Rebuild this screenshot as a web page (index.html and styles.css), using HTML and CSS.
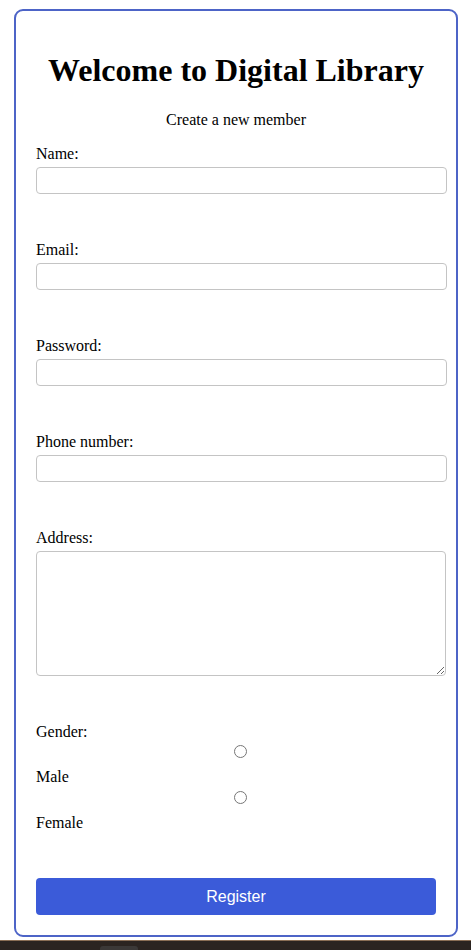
FILE: index.html
```html
<!DOCTYPE html>
<html lang="en">
<head>
<meta charset="utf-8">
<title>Digital Library</title>
<link rel="stylesheet" href="styles.css">
</head>
<body>
<div class="page">
  <form class="card">
    <h1 class="title">Welcome to Digital Library</h1>
    <p class="subtitle">Create a new member</p>

    <div class="field">
      <label class="label" for="name">Name:</label>
      <input class="input" id="name" type="text">
    </div>
    <div class="field">
      <label class="label" for="email">Email:</label>
      <input class="input" id="email" type="email">
    </div>
    <div class="field">
      <label class="label" for="password">Password:</label>
      <input class="input" id="password" type="password">
    </div>
    <div class="field">
      <label class="label" for="phone">Phone number:</label>
      <input class="input" id="phone" type="tel">
    </div>
    <div class="field">
      <label class="label" for="address">Address:</label>
      <textarea class="textarea" id="address"></textarea>
    </div>
    <div class="field gender">
      <span class="label">Gender:</span>
      <input class="radio" type="radio" name="gender" id="male">
      <label class="label" for="male">Male</label>
      <input class="radio" type="radio" name="gender" id="female">
      <label class="label" for="female">Female</label>
    </div>
    <button class="button" type="button">Register</button>
  </form>
</div>
<div class="taskbar"><span class="tab"></span></div>
</body>
</html>
```
FILE: styles.css
```css
html, body {
  margin: 0;
  padding: 0;
  background: #ffffff;
}
body {
  font-family: "Liberation Serif", "Times New Roman", serif;
  font-size: 16px;
  color: #000;
  width: 471px;
  height: 950px;
  overflow: hidden;
}
.page {
  padding: 9px 13px 3px 14px;
  height: 940px;
  box-sizing: border-box;
}
.card {
  width: 444px;
  height: 928px;
  box-sizing: border-box;
  border: 2px solid #4d64c7;
  border-radius: 9px;
  padding: 20px;
  display: flex;
  flex-direction: column;
}
.card > * {
  flex-shrink: 0;
}
.title {
  font-size: 32px;
  font-weight: bold;
  text-align: center;
  margin: 21px 0 22px 0;
  line-height: 37px;
}
.subtitle {
  text-align: center;
  margin: 0 0 16px 0;
  line-height: 18px;
}
.field {
  display: flex;
  flex-direction: column;
  margin-bottom: 47px;
}
.label {
  display: block;
  line-height: 18px;
  margin-bottom: 4px;
}
.input {
  width: 411px;
  height: 27px;
  box-sizing: border-box;
  border: 1px solid #c4c4c4;
  border-radius: 4px;
  padding: 5px;
  margin: 0;
  font-family: inherit;
  font-size: 14px;
}
.textarea {
  width: 410px;
  height: 125px;
  box-sizing: border-box;
  border: 1px solid #c4c4c4;
  border-radius: 4px;
  padding: 4px;
  margin: 0;
  font-family: inherit;
}
.gender .label {
  margin-bottom: 0;
}
.gender {
  margin-bottom: 46px;
}
.radio {
  display: block;
  width: 13px;
  height: 13px;
  margin: 4px 0 10px 198px;
}
.gender .label + .radio {
  margin-top: 5px;
}
.gender > .radio:first-of-type {
  margin-top: 4px;
}
.button {
  width: 400px;
  height: 37px;
  border: none;
  border-radius: 4px;
  background: #3b5bd9;
  color: #ffffff;
  font-family: "Liberation Sans", Arial, sans-serif;
  font-size: 16px;
  padding: 0;
}
.taskbar {
  height: 10px;
  background: #2b2421;
  border-top: 1px solid #8a6e55;
  box-sizing: border-box;
  position: relative;
}
.tab {
  position: absolute;
  left: 100px;
  top: 5px;
  width: 38px;
  height: 5px;
  background: #3b3837;
  border-radius: 3px 3px 0 0;
}
```
